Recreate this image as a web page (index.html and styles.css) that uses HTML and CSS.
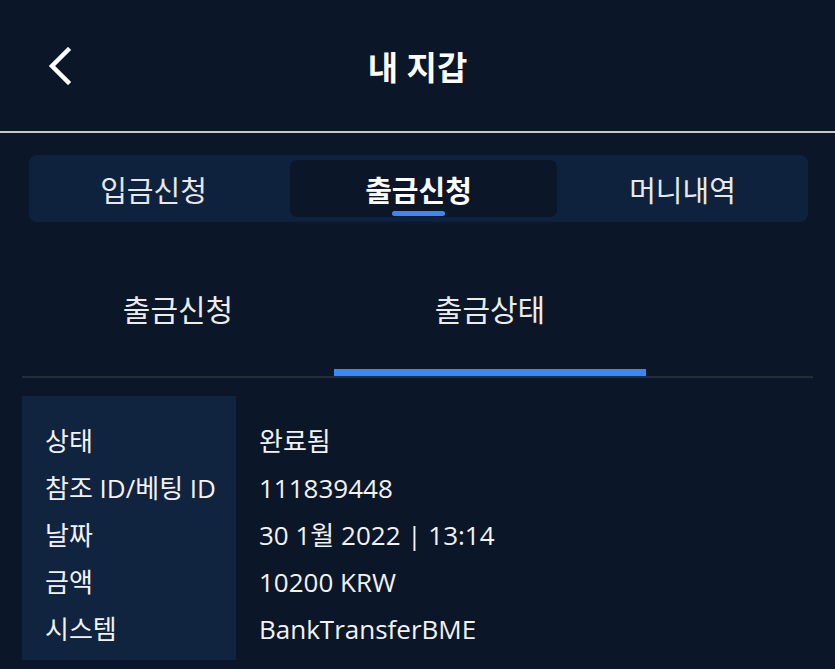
FILE: index.html
```html
<!DOCTYPE html>
<html lang="ko">
<head>
    <meta charset="UTF-8">
    <meta name="viewport" content="width=device-width, initial-scale=1.0">
    <title>내 지갑</title>
    <link rel="stylesheet" href="styles.css">
</head>
<body>
    <header class="topbar">
        <button class="back-btn" aria-label="뒤로">
            <svg width="26" height="38" viewBox="0 0 26 38">
                <path d="M21 3 L5 19 L21 35" fill="none" stroke="#fff" stroke-width="4.5" stroke-linecap="square"/>
            </svg>
        </button>
        <h1>내 지갑</h1>
        <span></span>
    </header>

    <div class="content">
        <nav class="segment">
            <button class="seg-btn first">입금신청</button>
            <button class="seg-btn active">출금신청</button>
            <button class="seg-btn">머니내역</button>
        </nav>

        <div class="subtabs">
            <button class="subtab">출금신청</button>
            <button class="subtab active">출금상태</button>
        </div>

        <div class="status-table">
            <div class="labels">
                <div class="row">상태</div>
                <div class="row">참조 ID/베팅 ID</div>
                <div class="row">날짜</div>
                <div class="row">금액</div>
                <div class="row">시스템</div>
            </div>
            <div class="values">
                <div class="row">완료됨</div>
                <div class="row">111839448</div>
                <div class="row">30 1월 2022 | 13:14</div>
                <div class="row">10200 KRW</div>
                <div class="row">BankTransferBME</div>
            </div>
        </div>
    </div>
</body>
</html>
```

FILE: styles.css
```css
* {
    box-sizing: border-box;
    margin: 0;
    padding: 0;
}

body {
    font-family: "Open Sans", "Noto Sans CJK KR", sans-serif;
    background: #0b1628;
    color: #f2f2f2;
    height: 669px;
    overflow: hidden;
}

button {
    font-family: inherit;
    background: none;
    border: none;
    color: inherit;
    cursor: pointer;
}

.topbar {
    display: grid;
    grid-template-columns: 1fr auto 1fr;
    align-items: center;
    height: 133px;
    padding-left: 47px;
    border-bottom: 2px solid #c9c9cb;
}

.back-btn {
    justify-self: start;
    display: flex;
}

.topbar h1 {
    font-size: 33px;
    font-weight: 700;
    color: #fff;
    margin-left: -47px;
}

.content {
    padding: 0 22px;
}

/* segmented control */
.segment {
    display: grid;
    grid-template-columns: 261px 267px 1fr;
    margin: 22px 5px 0 7px;
    padding: 5px 0;
    height: 67px;
    background: #0f223d;
    border-radius: 8px;
}

.seg-btn {
    position: relative;
    font-size: 29px;
    color: #e8e8e8;
    border-radius: 7px;
}

.seg-btn.first {
    padding-right: 12px;
}

.seg-btn.active {
    padding-right: 10px;
    background: #0b1628;
    font-weight: 700;
    color: #fff;
}

.seg-btn.active::after {
    content: "";
    position: absolute;
    left: 50%;
    bottom: 1px;
    width: 53px;
    height: 5px;
    margin-left: -32px;
    border-radius: 3px;
    background: #3d87f0;
}

/* sub tabs */
.subtabs {
    display: flex;
    margin-top: 22px;
    border-bottom: 2px solid #222d3c;
}

.subtab {
    width: 312px;
    height: 132px;
    padding-top: 2px;
    font-size: 30px;
    color: #ececec;
    border-bottom: 7px solid transparent;
}

.subtab.active {
    border-bottom-color: #3d87f0;
}

/* status table */
.status-table {
    display: flex;
    margin-top: 18px;
    font-size: 26px;
}

.labels {
    width: 214px;
    height: 264px;
    padding: 22px 0 0 23px;
    background: #10233f;
}

.values {
    padding: 22px 0 0 23px;
}

.row {
    height: 47px;
    line-height: 47px;
    white-space: nowrap;
}
```
